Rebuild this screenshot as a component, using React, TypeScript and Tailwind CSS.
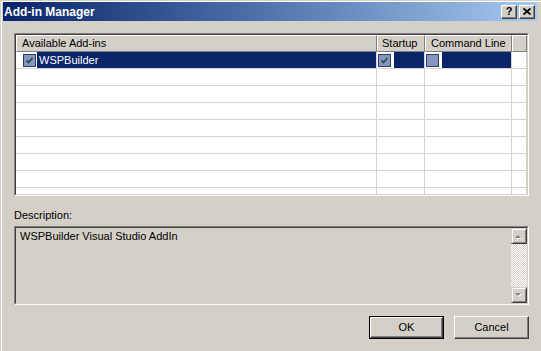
import React from "react";

function Check({ checked }: { checked?: boolean }) {
  return (
    <div className="w-[13px] h-[13px] shrink-0 border border-[#2b3a66] bg-[#8895c0] flex items-center justify-center">
      {checked && (
        <svg width="9" height="9" viewBox="0 0 9 9">
          <polyline points="1.5,4.5 3.5,6.5 7.5,2" fill="none" stroke="#1f4f4a" strokeWidth="1.8" />
        </svg>
      )}
    </div>
  );
}

function TitleButton({ children }: { children: React.ReactNode }) {
  return (
    <div className="w-[16px] h-[14px] bg-[#D4D0C8] border border-t-white border-l-white border-r-[#404040] border-b-[#404040] shadow-[inset_-1px_-1px_0_#808080] flex items-center justify-center text-black">
      {children}
    </div>
  );
}

function PushButton({ label, isDefault }: { label: string; isDefault?: boolean }) {
  return (
    <div className={isDefault ? "w-[75px] h-[23px] border border-black" : "w-[75px] h-[23px]"}>
      <div className="w-full h-full bg-[#D4D0C8] border border-t-white border-l-white border-r-[#404040] border-b-[#404040] shadow-[inset_-1px_-1px_0_#808080] flex items-center justify-center text-[11px] text-black">
        {label}
      </div>
    </div>
  );
}

function Arrow({ up }: { up?: boolean }) {
  return (
    <div className="w-[16px] h-[16px] shrink-0 bg-[#D4D0C8] border border-t-[#D4D0C8] border-l-[#D4D0C8] border-r-[#404040] border-b-[#404040] shadow-[inset_1px_1px_0_#fff,inset_-1px_-1px_0_#808080] flex items-center justify-center">
      <svg width="8" height="5" viewBox="0 0 8 5">
        {up ? (
          <>
            <polygon points="1,5 4,2 7,5" fill="#fff" />
            <polygon points="0,4 3,1 6,4" fill="#808080" />
          </>
        ) : (
          <>
            <polygon points="1,1 7,1 4,4" fill="#fff" />
            <polygon points="0,0 6,0 3,3" fill="#808080" />
          </>
        )}
      </svg>
    </div>
  );
}

const rows = [0, 1, 2, 3, 4, 5, 6, 7, 8];

export default function App() {
  return (
    <div className="w-[541px] h-[351px] bg-[#D4D0C8] overflow-hidden pl-[1px] pt-[1px] font-['Liberation_Sans',Arial,sans-serif] text-[11px] text-black">
      <div className="h-full border-l border-t border-white pl-[1px]">
        {/* title bar */}
        <div className="w-[534px] h-[19px] bg-gradient-to-r from-[#0A246A] to-[#A6CAF0] flex items-center pl-[1px] pr-[2px]">
          <span className="text-white font-bold text-[12px] leading-none">Add-in Manager</span>
          <div className="ml-auto flex gap-[2px]">
            <TitleButton>
              <span className="font-bold text-[11px] leading-none">?</span>
            </TitleButton>
            <TitleButton>
              <svg width="8" height="7" viewBox="0 0 8 7">
                <path d="M0.5 0.5 L7.5 6.5 M7.5 0.5 L0.5 6.5" stroke="#000" strokeWidth="1.8" />
              </svg>
            </TitleButton>
          </div>
        </div>

        {/* list view */}
        <div className="ml-[11px] mt-[12px] w-[515px] h-[163px] border border-t-[#808080] border-l-[#808080] border-r-white border-b-white">
          <div className="w-full h-full border border-t-[#404040] border-l-[#404040] border-r-[#D4D0C8] border-b-[#D4D0C8] bg-white overflow-hidden">
            <div className="flex h-[17px]">
              <div className="w-[361px] bg-[#D4D0C8] border border-t-white border-l-white border-r-[#808080] border-b-[#808080] pl-[5px] flex items-center">Available Add-ins</div>
              <div className="w-[48px] bg-[#D4D0C8] border border-t-white border-l-white border-r-[#808080] border-b-[#808080] pl-[4px] flex items-center">Startup</div>
              <div className="w-[87px] bg-[#D4D0C8] border border-t-white border-l-white border-r-[#808080] border-b-[#808080] pl-[5px] flex items-center">Command Line</div>
              <div className="flex-1 bg-[#D4D0C8] border border-t-white border-l-white border-r-[#808080] border-b-[#808080]" />
            </div>
            {rows.map((i) => (
              <div key={i} className="flex h-[17px] border-b border-[#D6D3CE]">
                <div className="w-[361px] border-r border-[#D6D3CE] flex items-center">
                  {i === 0 && (
                    <>
                      <div className="ml-[7px]">
                        <Check checked />
                      </div>
                      <div className="ml-[1px] flex-1 h-full bg-[#0A246A] text-white pl-[2px] flex items-center">WSPBuilder</div>
                    </>
                  )}
                </div>
                <div className="w-[48px] border-r border-[#D6D3CE] flex items-center">
                  {i === 0 && (
                    <>
                      <div className="ml-[1px]">
                        <Check checked />
                      </div>
                      <div className="ml-[3px] flex-1 h-full bg-[#0A246A]" />
                    </>
                  )}
                </div>
                <div className="w-[87px] border-r border-[#D6D3CE] flex items-center">
                  {i === 0 && (
                    <>
                      <div className="ml-[1px]">
                        <Check />
                      </div>
                      <div className="ml-[3px] flex-1 h-full bg-[#0A246A]" />
                    </>
                  )}
                </div>
                <div className="flex-1 border-r border-[#D6D3CE]" />
              </div>
            ))}
          </div>
        </div>

        {/* description */}
        <div className="ml-[11px] mt-[13px] leading-[13px]">Description:</div>
        <div className="ml-[11px] mt-[4px] w-[515px] h-[79px] border border-t-[#808080] border-l-[#808080] border-r-white border-b-white">
          <div className="w-full h-full border border-t-[#404040] border-l-[#404040] border-r-[#D4D0C8] border-b-[#D4D0C8] bg-[#D4D0C8] flex">
            <div className="flex-1 pl-[4px] pt-[2px] leading-[13px]">WSPBuilder Visual Studio AddIn</div>
            <div className="w-[16px] flex flex-col">
              <Arrow up />
              <div className="flex-1 bg-[repeating-conic-gradient(#ffffff_0_25%,#D4D0C8_0_50%)] bg-[length:2px_2px]" />
              <Arrow />
            </div>
          </div>
        </div>

        {/* buttons */}
        <div className="mt-[11px] flex justify-end gap-[10px] pr-[12px]">
          <PushButton label="OK" isDefault />
          <PushButton label="Cancel" />
        </div>
      </div>
    </div>
  );
}
